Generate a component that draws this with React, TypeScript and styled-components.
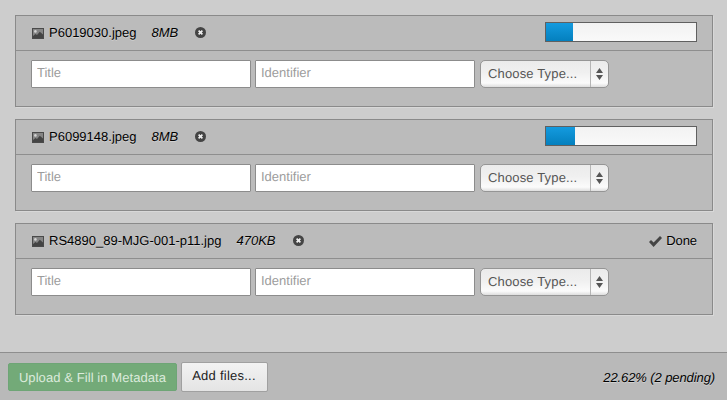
import React from "react";
import styled, { createGlobalStyle } from "styled-components";

const Global = createGlobalStyle`
  html, body { margin: 0; padding: 0; height: 400px; overflow: hidden; background: #cdcdcd; }
  body {
    font-family: "Liberation Sans", Arial, sans-serif;
    font-size: 13px;
    color: #000;
    text-rendering: geometricPrecision;
  }
  #root { height: 400px; }
`;

const Page = styled.div`
  height: 400px;
  display: flex;
  flex-direction: column;
  background: #cdcdcd;
`;

const List = styled.div`
  flex: 1;
  padding: 15px 14px 0 15px;
  display: flex;
  flex-direction: column;
  gap: 12px;
`;

const Panel = styled.section`
  height: 92px;
  box-sizing: border-box;
  background: #bbbbbb;
  border: 1px solid #8a8a8a;
  box-shadow: 1px 1px 0 #d8d8d8;
  display: flex;
  flex-direction: column;
`;

const Header = styled.header`
  height: 35px;
  box-sizing: border-box;
  border-bottom: 1px solid #8e8e8e;
  padding: 0 15px 0 16px;
  display: flex;
  align-items: center;
`;

const Name = styled.span`
  margin-left: 5px;
  line-height: 16px;
  text-shadow: 0 1px 0 rgba(255, 255, 255, 0.35);
`;

const Size = styled.em`
  margin-left: 15px;
  line-height: 16px;
  text-shadow: 0 1px 0 rgba(255, 255, 255, 0.35);
`;

const Remove = styled.span`
  margin-left: 17px;
  margin-top: -1px;
  display: inline-flex;
`;

const Progress = styled.div`
  margin-left: auto;
  width: 152px;
  height: 20px;
  box-sizing: border-box;
  border: 1px solid #606060;
  background: linear-gradient(#f2f2f2, #f9f9f9);
  margin-top: -2px;
`;

const Bar = styled.div`
  height: 100%;
  background: linear-gradient(#149bdf, #0480be);
`;

const Done = styled.span`
  margin-left: auto;
  display: inline-flex;
  align-items: center;
  gap: 4px;
  line-height: 16px;
  letter-spacing: -0.1px;
  text-shadow: 0 1px 0 rgba(255, 255, 255, 0.35);
`;

const Fields = styled.div`
  padding: 9px 15px 0;
  display: flex;
  gap: 4px;
`;

const Input = styled.input`
  width: 220px;
  height: 28px;
  box-sizing: border-box;
  border: 1px solid #8c8c8c;
  border-radius: 1px;
  background: #fff;
  padding: 0 5px 3px;
  font: 13px "Liberation Sans", Arial, sans-serif;
  text-rendering: geometricPrecision;
  outline: none;
  &::placeholder { color: #9c9c9c; opacity: 1; }
`;

const Select = styled.div`
  width: 129px;
  height: 28px;
  box-sizing: border-box;
  margin-left: 1px;
  border: 1px solid #959595;
  border-radius: 5px;
  background: linear-gradient(#ebebeb, #f0f0f0 45%, #fbfbfb 85%, #dedede);
  display: flex;
  align-items: stretch;
  color: #555;
  font-size: 13px;
  letter-spacing: 0.15px;
`;

const SelectLabel = styled.span`
  flex: 1;
  padding-left: 7px;
  line-height: 26px;
`;

const SelectArrows = styled.span`
  width: 17px;
  border-left: 1px solid #b5b5b5;
  display: flex;
  align-items: center;
  justify-content: center;
`;

const Footer = styled.footer`
  height: 48px;
  box-sizing: border-box;
  background: #b9b9b9;
  border-top: 1px solid #8e8e8e;
  padding: 0 12px 0 8px;
  display: flex;
  align-items: center;
  gap: 4px;
`;

const PrimaryButton = styled.button`
  width: 169px;
  height: 28px;
  margin-top: 1px;
  box-sizing: border-box;
  border: 1px solid #6ea576;
  border-radius: 2px;
  background: #73aa78;
  color: #dcebdc;
  font: 13px "Liberation Sans", Arial, sans-serif;
  letter-spacing: 0.08px;
  text-rendering: geometricPrecision;
  padding: 0;
`;

const SecondaryButton = styled.button`
  width: 87px;
  height: 30px;
  box-sizing: border-box;
  border: 1px solid #a0a0a0;
  border-radius: 2px;
  background: linear-gradient(#f2f2f2, #e4e4e4);
  color: #222;
  font: 13px "Liberation Sans", Arial, sans-serif;
  letter-spacing: 0.25px;
  text-rendering: geometricPrecision;
  padding: 0 1px 2px 0;
`;

const Status = styled.em`
  margin-left: auto;
  margin-top: 2px;
  letter-spacing: -0.1px;
  text-shadow: 0 1px 0 rgba(255, 255, 255, 0.35);
`;

const PictureIcon = () => (
  <svg width="12" height="11" viewBox="0 0 12 11">
    <path fill="#4a4a4a" fillRule="evenodd" d="M0 0h12v11H0zM1 1v9h10V1z" />
    <rect x="1" y="1" width="10" height="9" fill="#858585" />
    <circle cx="3.4" cy="3.4" r="1.3" fill="#d4d4d4" />
    <path fill="#444" d="M1 10V8l2.5-2 1.5 1 2.8-3.2L11 6.5V10z" />
  </svg>
);

const RemoveIcon = () => (
  <svg width="11" height="11" viewBox="0 0 11 11">
    <circle cx="5.5" cy="5.5" r="5.5" fill="#444" />
    <path d="M3.6 3.6l3.8 3.8M7.4 3.6l-3.8 3.8" stroke="#eee" strokeWidth="1.7" />
  </svg>
);

const CheckIcon = () => (
  <svg width="13" height="11" viewBox="0 0 13 11">
    <path fill="#444" d="M0 6l2-2 2.6 2.5L11 0l2 2-8.4 9z" />
  </svg>
);

const ArrowsIcon = () => (
  <svg width="7" height="12" viewBox="0 0 7 12">
    <path fill="#555" d="M3.5 0L7 5H0zM0 7h7l-3.5 5z" />
  </svg>
);

type Item = { name: string; size: string; progress?: number };

const items: Item[] = [
  { name: "P6019030.jpeg", size: "8MB", progress: 18 },
  { name: "P6099148.jpeg", size: "8MB", progress: 19.5 },
  { name: "RS4890_89-MJG-001-p11.jpg", size: "470KB" },
];

export default function App() {
  return (
    <Page>
      <Global />
      <List>
        {items.map((item) => (
          <Panel key={item.name}>
            <Header>
              <PictureIcon />
              <Name>{item.name}</Name>
              <Size>{item.size}</Size>
              <Remove><RemoveIcon /></Remove>
              {item.progress !== undefined ? (
                <Progress><Bar style={{ width: `${item.progress}%` }} /></Progress>
              ) : (
                <Done><CheckIcon />Done</Done>
              )}
            </Header>
            <Fields>
              <Input placeholder="Title" />
              <Input placeholder="Identifier" />
              <Select>
                <SelectLabel>Choose Type...</SelectLabel>
                <SelectArrows><ArrowsIcon /></SelectArrows>
              </Select>
            </Fields>
          </Panel>
        ))}
      </List>
      <Footer>
        <PrimaryButton>Upload &amp; Fill in Metadata</PrimaryButton>
        <SecondaryButton>Add files...</SecondaryButton>
        <Status>22.62% (2 pending)</Status>
      </Footer>
    </Page>
  );
}
